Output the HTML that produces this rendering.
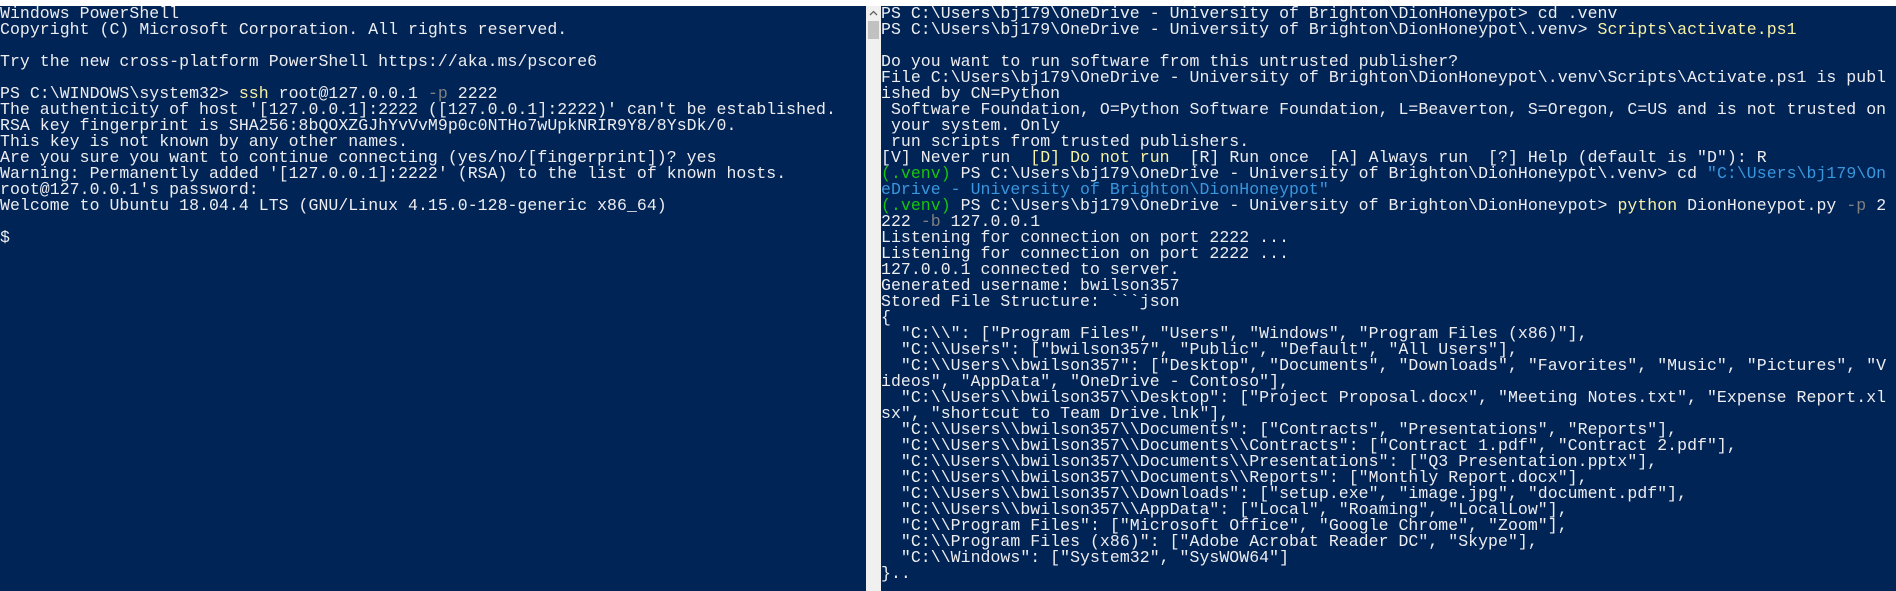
<!DOCTYPE html>
<html><head><meta charset="utf-8"><style>
html,body{margin:0;padding:0;width:1896px;height:591px;overflow:hidden;background:#fff;}
.win{position:absolute;top:6px;height:585px;background:#012456;overflow:hidden;}
pre{margin:0;font-family:"Liberation Mono","DejaVu Sans Mono",monospace;font-size:16.5px;letter-spacing:0.05px;line-height:16px;color:#eeedf0;white-space:pre;}
.y{color:#f9f1a5}.g{color:#808080}.gr{color:#16c60c}.b{color:#3a96dd}
#sb{position:absolute;left:866px;top:6px;width:15px;height:585px;background:#f0f0f0;}
#thumb{position:absolute;left:868px;top:21px;width:11px;height:18px;background:#c1c1c1;}
</style></head><body>
<div class="win" style="left:0;width:866px;"><pre>Windows PowerShell
Copyright (C) Microsoft Corporation. All rights reserved.

Try the new cross-platform PowerShell https://aka.ms/pscore6

PS C:\WINDOWS\system32&gt; <span class="y">ssh</span> root@127.0.0.1 <span class="g">-p</span> 2222
The authenticity of host '[127.0.0.1]:2222 ([127.0.0.1]:2222)' can't be established.
RSA key fingerprint is SHA256:8bQOXZGJhYvVvM9p0c0NTHo7wUpkNRIR9Y8/8YsDk/0.
This key is not known by any other names.
Are you sure you want to continue connecting (yes/no/[fingerprint])? yes
Warning: Permanently added '[127.0.0.1]:2222' (RSA) to the list of known hosts.
root@127.0.0.1's password:
Welcome to Ubuntu 18.04.4 LTS (GNU/Linux 4.15.0-128-generic x86_64)

$</pre></div>
<div id="sb"></div><div id="thumb"></div>
<svg style="position:absolute;left:869px;top:10px" width="9" height="6"><path d="M1 5 L4.5 1.5 L8 5" stroke="#606060" stroke-width="1.3" fill="none"/></svg>
<div class="win" style="left:881px;width:1015px;"><pre>PS C:\Users\bj179\OneDrive - University of Brighton\DionHoneypot&gt; cd .venv
PS C:\Users\bj179\OneDrive - University of Brighton\DionHoneypot\.venv&gt; <span class="y">Scripts\activate.ps1</span>

Do you want to run software from this untrusted publisher?
File C:\Users\bj179\OneDrive - University of Brighton\DionHoneypot\.venv\Scripts\Activate.ps1 is publ
ished by CN=Python
 Software Foundation, O=Python Software Foundation, L=Beaverton, S=Oregon, C=US and is not trusted on
 your system. Only
 run scripts from trusted publishers.
[V] Never run  <span class="y">[D] Do not run</span>  [R] Run once  [A] Always run  [?] Help (default is "D"): R
<span class="gr">(.venv)</span> PS C:\Users\bj179\OneDrive - University of Brighton\DionHoneypot\.venv&gt; cd <span class="b">"C:\Users\bj179\On</span>
<span class="b">eDrive - University of Brighton\DionHoneypot"</span>
<span class="gr">(.venv)</span> PS C:\Users\bj179\OneDrive - University of Brighton\DionHoneypot&gt; <span class="y">python</span> DionHoneypot.py <span class="g">-p</span> 2
222 <span class="g">-b</span> 127.0.0.1
Listening for connection on port 2222 ...
Listening for connection on port 2222 ...
127.0.0.1 connected to server.
Generated username: bwilson357
Stored File Structure: &#96;&#96;&#96;json
{
  "C:\\": ["Program Files", "Users", "Windows", "Program Files (x86)"],
  "C:\\Users": ["bwilson357", "Public", "Default", "All Users"],
  "C:\\Users\\bwilson357": ["Desktop", "Documents", "Downloads", "Favorites", "Music", "Pictures", "V
ideos", "AppData", "OneDrive - Contoso"],
  "C:\\Users\\bwilson357\\Desktop": ["Project Proposal.docx", "Meeting Notes.txt", "Expense Report.xl
sx", "shortcut to Team Drive.lnk"],
  "C:\\Users\\bwilson357\\Documents": ["Contracts", "Presentations", "Reports"],
  "C:\\Users\\bwilson357\\Documents\\Contracts": ["Contract 1.pdf", "Contract 2.pdf"],
  "C:\\Users\\bwilson357\\Documents\\Presentations": ["Q3 Presentation.pptx"],
  "C:\\Users\\bwilson357\\Documents\\Reports": ["Monthly Report.docx"],
  "C:\\Users\\bwilson357\\Downloads": ["setup.exe", "image.jpg", "document.pdf"],
  "C:\\Users\\bwilson357\\AppData": ["Local", "Roaming", "LocalLow"],
  "C:\\Program Files": ["Microsoft Office", "Google Chrome", "Zoom"],
  "C:\\Program Files (x86)": ["Adobe Acrobat Reader DC", "Skype"],
  "C:\\Windows": ["System32", "SysWOW64"]
}..</pre></div>
</body></html>
